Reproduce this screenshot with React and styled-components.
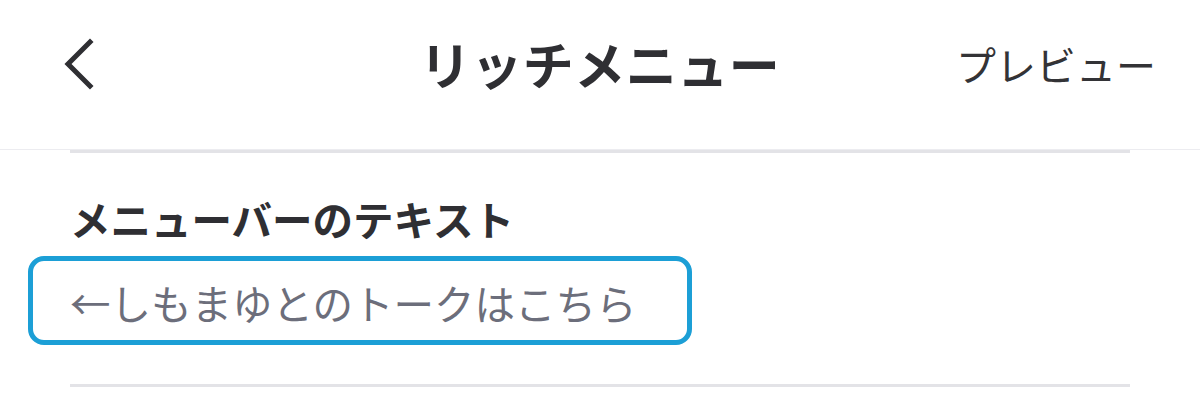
import * as React from 'react';
import styled, { createGlobalStyle } from 'styled-components';

const GlobalStyle = createGlobalStyle`
  html, body {
    margin: 0;
    padding: 0;
    background: #ffffff;
  }
  body {
    font-family: "Noto Sans CJK JP", "Noto Sans", sans-serif;
  }
  * {
    box-sizing: border-box;
  }
`;

const Page = styled.div`
  width: 1200px;
  height: 396px;
  background: #ffffff;
  overflow: hidden;
`;

const Header = styled.header`
  height: 150px;
  display: grid;
  grid-template-columns: 1fr auto 1fr;
  align-items: center;
  padding: 0 44px 22px;
  border-bottom: 1px solid #ececf0;
`;

const BackButton = styled.button`
  justify-self: start;
  display: flex;
  align-items: center;
  margin-left: 16px;
  padding: 0;
  border: none;
  background: none;
  color: #2f2f33;
`;

const Title = styled.h1`
  margin: 0;
  font-size: 51px;
  font-weight: 700;
  color: #2f2f33;
  letter-spacing: 0.5px;
  line-height: 1;
`;

const HeaderAction = styled.span`
  justify-self: end;
  font-size: 40px;
  font-weight: 400;
  color: #333336;
  line-height: 1;
`;

const Divider = styled.div`
  height: 3px;
  margin: ${(p) => p.$top || 0}px 70px 0;
  background: #e3e3e7;
`;

const Section = styled.section`
  padding: 46px 0 0 28px;
`;

const Label = styled.div`
  padding-left: 42px;
  font-size: 40.5px;
  font-weight: 700;
  color: #2f2f33;
  line-height: 1;
`;

const InputBox = styled.div`
  margin-top: 16px;
  width: 664px;
  height: 89px;
  display: flex;
  align-items: center;
  padding: 6px 0 0 37px;
  border: 5px solid #1c9fd6;
  border-radius: 16px;
  font-size: 40.5px;
  color: #6c6e7b;
  line-height: 1;
`;

function ChevronLeft() {
  return (
    <svg width="36" height="52" viewBox="0 0 36 52" fill="none">
      <path d="M30 4 L8 26 L30 48" stroke="currentColor" strokeWidth="5" strokeLinecap="square" strokeLinejoin="miter" />
    </svg>
  );
}

export default function App() {
  return (
    <Page>
      <GlobalStyle />
      <Header>
        <BackButton aria-label="戻る">
          <ChevronLeft />
        </BackButton>
        <Title>リッチメニュー</Title>
        <HeaderAction>プレビュー</HeaderAction>
      </Header>
      <Divider />
      <Section>
        <Label>メニューバーのテキスト</Label>
        <InputBox>←しもまゆとのトークはこちら</InputBox>
      </Section>
      <Divider $top={39} />
    </Page>
  );
}
